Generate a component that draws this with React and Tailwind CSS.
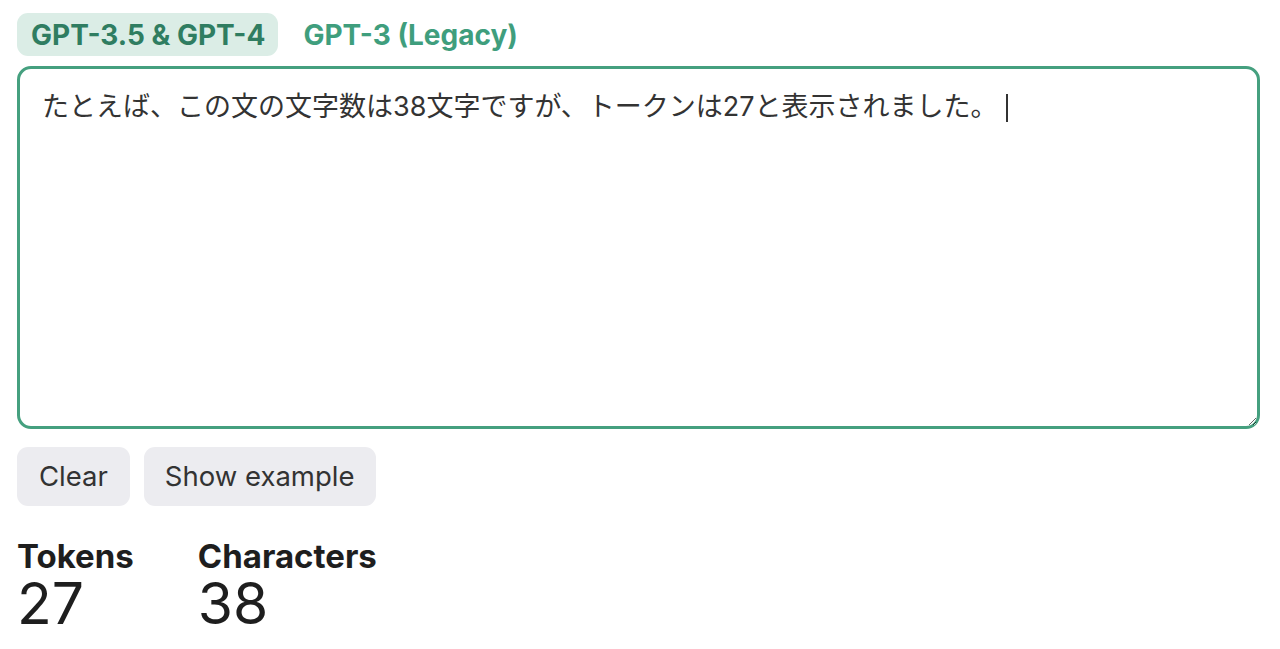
import { useState } from "react";

const sample = "たとえば、この文の文字数は38文字ですが、トークンは27と表示されました。 ";

const App = () => {
    const [tab, setTab] = useState("gpt4");
    const [text, setText] = useState(sample);

    const font = { fontFamily: '"Inter", "Noto Sans CJK JP", sans-serif' };

    return (
        <div className="min-h-screen bg-white pl-[17px] pr-[20px] pt-[13px] text-[#333]" style={font}>
            <div className="flex items-center gap-[11px]">
                <button
                    onClick={() => setTab("gpt4")}
                    className={`h-[43px] pl-[14px] pr-[13px] rounded-[11px] text-[28px] font-bold ${tab === "gpt4" ? "bg-[#dbede6] text-[#2f7d61]" : "text-[#3f9e7d]"}`}
                >
                    GPT-3.5 &amp; GPT-4
                </button>
                <button
                    onClick={() => setTab("gpt3")}
                    className={`h-[43px] pl-[14px] pr-[13px] rounded-[11px] text-[28px] font-bold ${tab === "gpt3" ? "bg-[#dbede6] text-[#2f7d61]" : "text-[#3f9e7d]"}`}
                >
                    GPT-3 (Legacy)
                </button>
            </div>

            <div className="relative mt-[10px]">
                <textarea
                    value={text}
                    onChange={(e) => setText(e.target.value)}
                    className="block w-full h-[363px] border-[3px] border-[#45a07f] rounded-[14px] px-[22px] py-[18px] text-[27px] leading-[40px] text-[#333] outline-none resize-y"
                    style={font}
                />
                {text === sample && <span className="absolute left-[989px] top-[28px] h-[28px] w-[2px] bg-[#333]" />}
            </div>

            <div className="flex gap-[14px] mt-[18px]">
                <button onClick={() => setText("")} className="h-[59px] px-[22px] rounded-[11px] bg-[#ececf0] text-[27.5px] text-[#333]">
                    Clear
                </button>
                <button onClick={() => setText(sample)} className="h-[59px] px-[21px] rounded-[11px] bg-[#ececf0] text-[27.5px] text-[#333]">
                    Show example
                </button>
            </div>

            <div className="flex gap-[64px] mt-[30px] text-[#1e1e1e]">
                <div>
                    <div className="text-[33px] font-bold leading-[40px]">Tokens</div>
                    <div className="text-[57px] leading-[56px]">27</div>
                </div>
                <div>
                    <div className="text-[33px] font-bold leading-[40px]">Characters</div>
                    <div className="text-[57px] leading-[56px]">{text.length}</div>
                </div>
            </div>
        </div>
    );
};

export default App;
